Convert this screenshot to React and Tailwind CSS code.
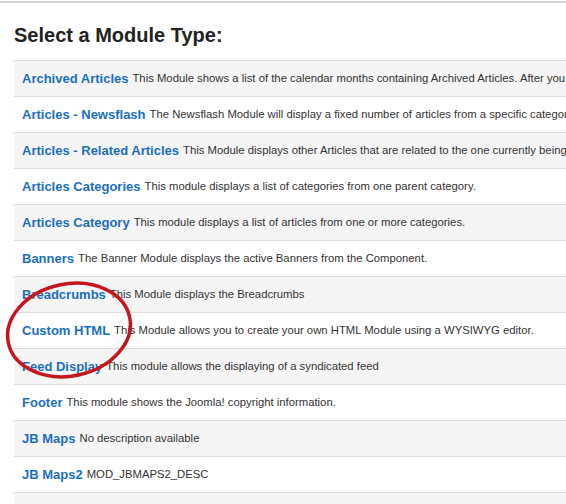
const modules = [
  ['Archived Articles', 'This Module shows a list of the calendar months containing Archived Articles. After you...'],
  ['Articles - Newsflash', 'The Newsflash Module will display a fixed number of articles from a specific category or a set of categories.'],
  ['Articles - Related Articles', 'This Module displays other Articles that are related to the one currently being viewed.'],
  ['Articles Categories', 'This module displays a list of categories from one parent category.'],
  ['Articles Category', 'This module displays a list of articles from one or more categories.'],
  ['Banners', 'The Banner Module displays the active Banners from the Component.'],
  ['Breadcrumbs', 'This Module displays the Breadcrumbs'],
  ['Custom HTML', 'This Module allows you to create your own HTML Module using a WYSIWYG editor.'],
  ['Feed Display', 'This module allows the displaying of a syndicated feed'],
  ['Footer', 'This module shows the Joomla! copyright information.'],
  ['JB Maps', 'No description available'],
  ['JB Maps2', 'MOD_JBMAPS2_DESC'],
  ['', ''],
];

export default function App() {
  return (
    <div className="relative w-[566px] h-[504px] overflow-hidden bg-white font-['Liberation_Sans',Arial,sans-serif] text-[#333]">
      <div className="h-[2px] mt-[1px] bg-[#d6d6d6]" />
      <div className="pl-[14px]">
        <h2 className="pt-[21px] pb-[13px] text-[20px] leading-[23px] font-bold text-[#222]">
          Select a Module Type:
        </h2>
        <div className="w-[700px]">
          {modules.map(([name, desc], i) => (
            <div
              key={i}
              className={`flex items-center h-[36px] border-t border-[#dddddd] px-[8px] whitespace-nowrap ${
                i % 2 === 0 ? 'bg-[#f5f5f5]' : 'bg-white'
              }`}
            >
              <a className="text-[13px] font-bold text-[#1a6fbf]">{name}</a>
              <span className="ml-[4px] text-[11.3px] text-[#333]">{desc}</span>
            </div>
          ))}
        </div>
      </div>
      {/* red annotation circle */}
      <svg className="absolute left-0 top-[270px]" width="150" height="120" viewBox="0 0 150 120">
        <ellipse cx="69" cy="60" rx="62" ry="46" transform="rotate(-12 69 60)" fill="none" stroke="#c4161c" strokeWidth="3.5" />
      </svg>
    </div>
  );
}
